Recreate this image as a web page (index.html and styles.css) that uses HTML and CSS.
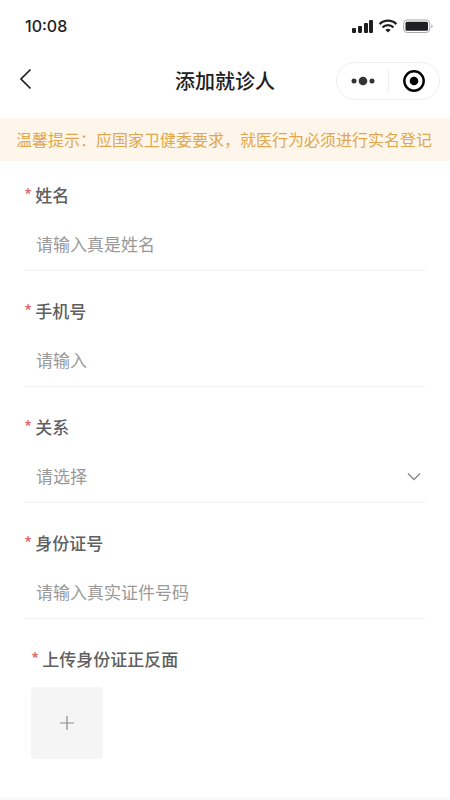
FILE: index.html
```html
<!DOCTYPE html>
<html lang="zh-CN">
<head>
<meta charset="utf-8">
<meta name="viewport" content="width=device-width, initial-scale=1">
<title>添加就诊人</title>
<link rel="stylesheet" href="styles.css">
</head>
<body>
<div class="status">
  <time class="clock">10:08</time>
  <svg class="indicators" width="82" height="16" viewBox="0 0 82 16" aria-hidden="true">
    <g fill="#202022">
      <rect x="0" y="10" width="4" height="5" rx="1"/>
      <rect x="6" y="8" width="4" height="7" rx="1"/>
      <rect x="12" y="5" width="4" height="10" rx="1"/>
      <rect x="17" y="2" width="4" height="13" rx="1"/>
      <path d="M36 14.500l-2.600-2.600a3.800 3.800 0 0 1 5.200 0z"/>
    </g>
    <g fill="none" stroke="#202022" stroke-width="2.2">
      <path d="M27.600 6.100a12 12 0 0 1 16.800 0"/>
      <path d="M30.500 9.400a7.800 7.800 0 0 1 11 0"/>
    </g>
    <rect x="51.700" y="2" width="26" height="12.500" rx="3.500" fill="none" stroke="#a8a8a8"/>
    <rect x="53.500" y="3.700" width="22.500" height="9" rx="1.500" fill="#202022"/>
    <path d="M79.300 6.300v4c1.800-.6 1.800-3.400 0-4z" fill="#a8a8a8"/>
  </svg>
</div>
<header class="nav">
  <button class="back" type="button" aria-label="返回">
    <svg width="14" height="22" viewBox="0 0 14 22"><path d="M11.500 1.500L2 11l9.500 9.500" fill="none" stroke="#202022" stroke-width="1.700"/></svg>
  </button>
  <h1 class="title">添加就诊人</h1>
  <div class="capsule">
    <button class="capsule-button" type="button" aria-label="更多">
      <svg width="24" height="24" viewBox="0 0 24 24" fill="#333"><circle cx="3" cy="12" r="2.500"/><circle cx="12" cy="12" r="4.300"/><circle cx="21" cy="12" r="2.500"/></svg>
    </button>
    <button class="capsule-button" type="button" aria-label="关闭">
      <svg width="24" height="24" viewBox="0 0 24 24"><circle cx="12" cy="12" r="9.700" fill="none" stroke="#000" stroke-width="2.400"/><circle cx="12" cy="12" r="4.300"/></svg>
    </button>
  </div>
</header>
<p class="tip">温馨提示：应国家卫健委要求，就医行为必须进行实名登记</p>
<form class="form">
  <div class="field">
    <label class="label" for="name">姓名</label>
    <input class="control" id="name" type="text" placeholder="请输入真是姓名">
  </div>
  <div class="field">
    <label class="label" for="phone">手机号</label>
    <input class="control" id="phone" type="tel" placeholder="请输入">
  </div>
  <div class="field">
    <label class="label" for="relation">关系</label>
    <div class="picker">
      <select class="control" id="relation"><option>请选择</option></select>
      <svg class="chevron" width="14" height="10" viewBox="0 0 14 10" aria-hidden="true"><path d="M1 1.500l6 6 6-6" fill="none" stroke="#8c8c90" stroke-width="1.500"/></svg>
    </div>
  </div>
  <div class="field">
    <label class="label" for="idcard">身份证号</label>
    <input class="control" id="idcard" type="text" placeholder="请输入真实证件号码">
  </div>
  <div class="upload">
    <span class="label" id="upload-label">上传身份证正反面</span>
    <button class="add" type="button" aria-labelledby="upload-label">
      <svg width="16" height="16" viewBox="0 0 16 16"><path d="M8 1v14M1 8h14" fill="none" stroke="#8c8c90" stroke-width="1.200"/></svg>
    </button>
  </div>
</form>
</body>
</html>
```

FILE: styles.css
```css
* {
  box-sizing: border-box;
}

body {
  display: flex;
  flex-direction: column;
  min-height: 100vh;
  margin: 0;
  border-bottom: 3px solid #fafafa;
  background: #fff;
  color: #606060;
  font-family: "Noto Sans CJK SC", sans-serif;
  font-size: 17px;
  line-height: 24px;
}

button,
input,
select {
  margin: 0;
  padding: 0;
  border: 0;
  background: none;
  color: inherit;
  font: inherit;
}

svg {
  display: block;
}

.status {
  display: flex;
  align-items: center;
  justify-content: space-between;
  height: 52px;
  padding: 0 16px 0 25px;
}

.clock {
  color: #202022;
  font-family: Inter, sans-serif;
  font-size: 16px;
  font-weight: 500;
}

.nav {
  display: grid;
  grid-template-columns: 1fr auto 1fr;
  align-items: center;
  height: 66px;
  padding: 0 10px 8px;
}

.back {
  justify-self: start;
  margin: 0 0 4px 9px;
}

.title {
  margin: 0;
  color: #202022;
  font-size: 20px;
  font-weight: 500;
}

.capsule {
  display: flex;
  justify-self: end;
  width: 104px;
  height: 38px;
  border: 1px solid #eee;
  border-radius: 19px;
}

.capsule-button {
  display: flex;
  flex: 1;
  align-items: center;
  justify-content: center;
}

.capsule-button + .capsule-button {
  position: relative;
}

.capsule-button + .capsule-button::before {
  position: absolute;
  top: 7px;
  bottom: 7px;
  left: 0;
  border-left: 1px solid #eee;
  content: "";
}

.tip {
  margin: 0;
  padding: 9px 16px 10px;
  background: #fef5eb;
  color: #dfa850;
  font-size: 16px;
  white-space: nowrap;
}

.form {
  display: flex;
  flex: 1;
  flex-direction: column;
  gap: 28px;
  padding: 22px 24px;
}

.field {
  display: flex;
  flex-direction: column;
  gap: 19px;
  padding-bottom: 9px;
  border-bottom: 1px solid #f2f2f2;
}

.label {
  display: flex;
  gap: 3px;
  font-weight: 500;
}

.label::before {
  color: #e06c6c;
  content: "*";
}

.control {
  width: 100%;
  height: 35px;
  padding: 0 12px;
  appearance: none;
  color: #999;
  outline: 0;
}

.control::placeholder {
  color: #999;
  opacity: 1;
}

.picker {
  position: relative;
}

.chevron {
  position: absolute;
  top: 14px;
  right: 5px;
  pointer-events: none;
}

.upload {
  display: flex;
  flex-direction: column;
  align-items: flex-start;
  gap: 16px;
  padding-left: 7px;
}

.add {
  display: flex;
  align-items: center;
  justify-content: center;
  width: 72px;
  height: 72px;
  border-radius: 4px;
  background: #f5f5f5;
}
```
